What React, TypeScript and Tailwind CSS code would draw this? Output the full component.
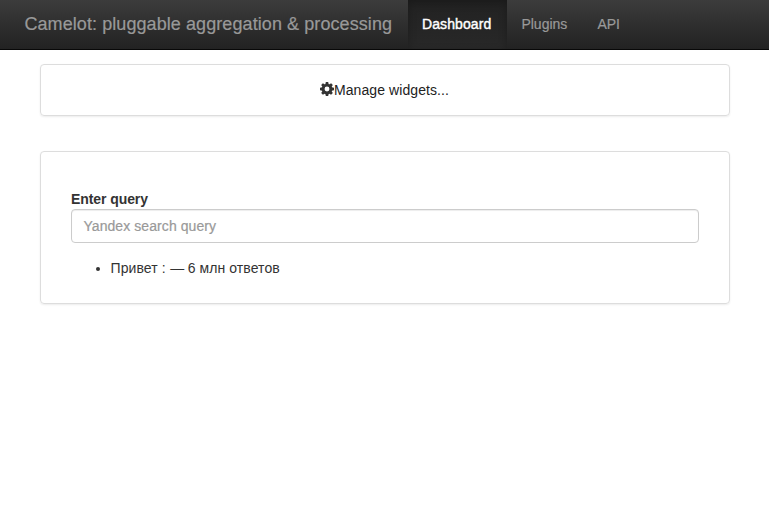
const nav = [
  { label: 'Plugins', width: 'w-[76px]' },
  { label: 'API', width: 'w-[52px]' },
];

const teeth = [0, 45, 90, 135, 180, 225, 270, 315];

function Cog() {
  return (
    <svg className="mb-[2px] block h-[14px] w-[14px] shrink-0 text-[#333]" viewBox="0 0 14 14" aria-hidden="true">
      <circle cx="7" cy="7" r="3.9" fill="none" stroke="currentColor" strokeWidth="2.9" />
      {teeth.map((angle) => (
        <path key={angle} d="M5.3 2.4 5.8 0h2.4l.5 2.4z" fill="currentColor" transform={`rotate(${angle} 7 7)`} />
      ))}
    </svg>
  );
}

export default function App() {
  return (
    <div className="h-[520px] w-full overflow-hidden bg-white font-['Liberation_Sans',Arial,sans-serif] text-[14px] leading-5 text-[#333]">
      <nav className="flex h-[50px] border-b border-[#080808] bg-linear-to-b from-[#3c3c3c] to-[#222] text-[#999]">
        <a className="h-[49px] w-[408px] pt-[14px] pl-[24.4px] text-[18px] leading-5 tracking-[0.08px] whitespace-nowrap [-webkit-text-stroke:0.2px_#999]">
          Camelot: pluggable aggregation &amp; processing
        </a>
        <a className="h-[49px] w-[99px] bg-linear-to-b from-[#222] to-[#282828] pt-[14px] pl-[14px] tracking-[0.1px] text-white shadow-[inset_0_3px_9px_rgba(0,0,0,0.25)] [-webkit-text-stroke:0.4px_white]">Dashboard</a>
        {nav.map(({ label, width }) => <a key={label} className={`h-[49px] pt-[14px] pl-[14.4px] [-webkit-text-stroke:0.2px_#999] ${width}`}>{label}</a>)}
      </nav>
      <main className="pt-[14px] pr-[39px] pl-10">
        <section className="flex h-[52px] items-center justify-center rounded border border-[#ddd] pr-px shadow-[0_1px_2px_rgba(0,0,0,0.075)]">
          <Cog /><span className="tracking-[0.08px] text-[#222]">Manage widgets...</span>
        </section>
        <section className="mt-[35px] h-[153px] rounded border border-[#ddd] px-[30px] pt-[37px] shadow-[0_1px_2px_rgba(0,0,0,0.075)]">
          <label className="block font-bold tracking-[-0.08px]">Enter query</label>
          <input placeholder="Yandex search query" className="block h-[34px] w-full rounded border border-[#ccc] pr-3 pl-[11.4px] tracking-[0.08px] shadow-[inset_0_1px_1px_rgba(0,0,0,0.075)] placeholder:text-[#999] placeholder:[-webkit-text-stroke:0.2px_#999]" />
          <ul className="mt-[15px] list-disc pl-[39.6px]"><li className="tracking-[0.08px]">Привет : <span className="mr-[-0.5px] ml-[0.5px]">—</span> 6 млн ответов</li></ul>
        </section>
      </main>
    </div>
  );
}
